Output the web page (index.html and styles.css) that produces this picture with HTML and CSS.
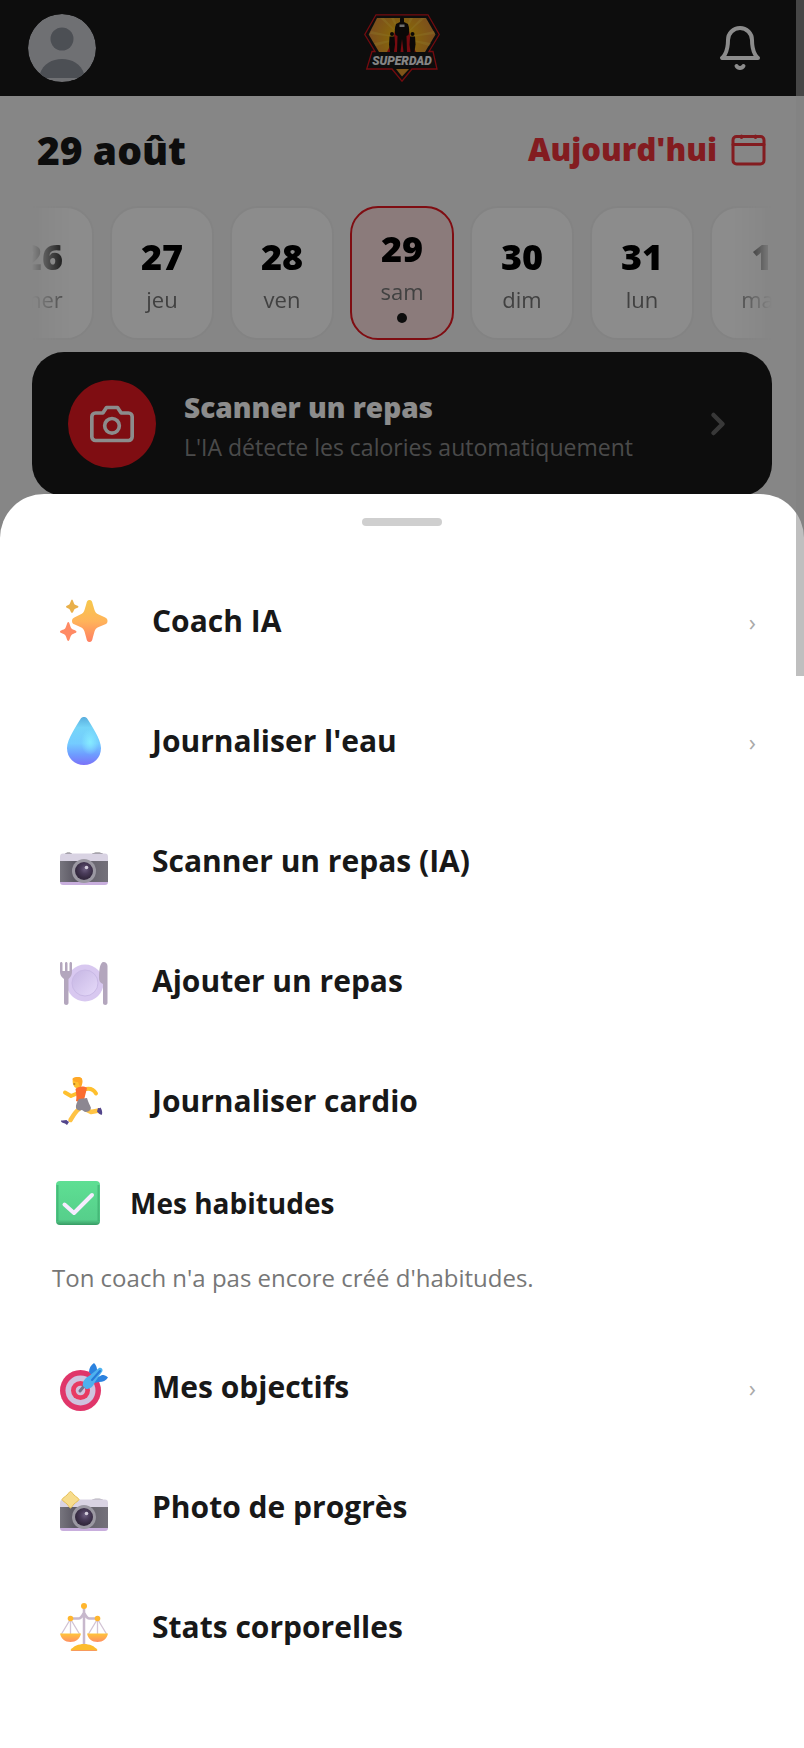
FILE: index.html
```html
<!DOCTYPE html>
<html lang="fr">
<head>
    <meta charset="UTF-8">
    <meta name="viewport" content="width=device-width, initial-scale=1.0">
    <title>Superdad</title>
    <link rel="stylesheet" href="styles.css">
</head>
<body>
    <header class="topbar">
        <button class="avatar" aria-label="Profil">
            <svg viewBox="0 0 68 68" width="68" height="68">
                <circle cx="34" cy="34" r="34" fill="#cbccd2"/>
                <circle cx="34" cy="25" r="11.500" fill="#8b9099"/>
                <path d="M12 59.500C15 50 24 45 34 45s19 5 22 14.500l-3.500 5.500h-37z" fill="#8b9099"/>
                <path d="M11 65h46" stroke="#cbccd2" stroke-width="2"/>
            </svg>
        </button>
        <svg class="logo" viewBox="0 0 76 68" width="76" height="68" role="img" aria-label="Superdad">
            <defs>
                <radialGradient id="sun" gradientUnits="userSpaceOnUse" cx="38" cy="24" r="34">
                    <stop offset="0" stop-color="#ffd400"/>
                    <stop offset=".45" stop-color="#f0b01c"/>
                    <stop offset="1" stop-color="#e08c38"/>
                </radialGradient>
            </defs>
            <path d="M12 .8h52l11.300 19.700L65 37.500h4L73 55H48L38 67.200 28 55H2.700L8 37.500h3L.8 20.500z" fill="#181818" stroke="#d3141c" stroke-width="1.300"/>
            <path d="M13 4h49l9.500 16.500L61 38H15L4.700 20.500z" fill="url(#sun)"/>
            <path d="M38 24 16 4h4zM38 24 27 4h3zM38 24 46 4h3zM38 24 57 4h4zM38 24 7 17l-1 3zM38 24 10 29l2 3zM38 24l32-7 1 3zM38 24l29 5-2 3z" fill="#ffd84a" opacity=".4"/>
            <path d="M33 11c-2 5-3 9-4 14-2 5-4 9-6 13h29c-3-5-4-9-5-13-1-5-2-9-4-14z" fill="#d9141e"/>
            <path d="M36 5c0-3.500 4-3.500 4 0v3l4 2c1.500 4 1.500 8 .5 11l-2 1 .5 16h-3.500L38 25l-1.500 13H33l.5-16-2-1c-1-3-1-7 .5-11l4-2z" fill="#15100e"/>
            <path d="M35.500 10.500h5v2.500h-5z" fill="#c9c9c9"/>
            <circle cx="28" cy="20" r="2" fill="#15100e"/>
            <path d="M25.500 22.500h5l.5 8-1 7.500h-4l-1-7.500z" fill="#15100e"/>
            <circle cx="48.500" cy="20" r="2" fill="#15100e"/>
            <path d="M46 22.500h5l.5 8-1 7.500h-4l-1-7.500z" fill="#15100e"/>
            <path d="M32 55h13l-7 7.500z" fill="#e69a2c"/>
            <text class="logo-text" x="38" y="51" text-anchor="middle">SUPERDAD</text>
        </svg>
        <button class="bell" aria-label="Notifications">
            <svg viewBox="0 0 24 24" width="48" height="48" class="line-icon">
                <path d="M18 8A6 6 0 0 0 6 8c0 7-3 9-3 9h18s-3-2-3-9"/>
                <path d="M13.730 21a2 2 0 0 1-3.460 0"/>
            </svg>
        </button>
    </header>

    <main class="page">
        <div class="date-row">
            <h1 class="date-title">29 août</h1>
            <button class="today">
                Aujourd'hui
                <svg viewBox="0 0 36 36" width="36" height="36" fill="none" stroke="currentColor" stroke-width="3" stroke-linecap="round">
                    <rect x="2" y="5.500" width="31" height="27.500" rx="3.500"/>
                    <path d="M2 13.500h31M10.500 5v1.500M24.500 5v1.500"/>
                </svg>
            </button>
        </div>

        <div class="days">
            <button class="day"><strong>26</strong><span>mer</span></button>
            <button class="day"><strong>27</strong><span>jeu</span></button>
            <button class="day"><strong>28</strong><span>ven</span></button>
            <button class="day day-active"><strong>29</strong><span>sam</span><i class="dot"></i></button>
            <button class="day"><strong>30</strong><span>dim</span></button>
            <button class="day"><strong>31</strong><span>lun</span></button>
            <button class="day"><strong>1</strong><span>mar</span></button>
        </div>

        <button class="scan">
            <span class="scan-icon">
                <svg viewBox="0 0 24 24" width="44" height="44" class="line-icon">
                    <path d="M23 19a2 2 0 0 1-2 2H3a2 2 0 0 1-2-2V8a2 2 0 0 1 2-2h4l2-3h6l2 3h4a2 2 0 0 1 2 2z"/>
                    <circle cx="12" cy="13" r="4"/>
                </svg>
            </span>
            <span class="scan-text">
                <span class="scan-title">Scanner un repas</span>
                <span class="scan-sub">L'IA détecte les calories automatiquement</span>
            </span>
            <svg viewBox="0 0 24 24" width="36" height="36" class="line-icon scan-arrow">
                <path d="M9 18l6-6-6-6"/>
            </svg>
        </button>
    </main>

    <div class="scrim"></div>

    <section class="sheet" aria-label="Actions rapides">
        <div class="handle"></div>

        <button class="action">
            <svg class="action-icon" viewBox="0 0 48 48">
                <defs>
                    <linearGradient id="spark" x1="0" y1="0" x2="0" y2="1">
                        <stop offset="0" stop-color="#f6c84c"/>
                        <stop offset=".5" stop-color="#ffb45a"/>
                        <stop offset="1" stop-color="#ff7f62"/>
                    </linearGradient>
                </defs>
                <path fill="url(#spark)" d="M29.500 3c2 0 2.700 1.500 3.200 4l1.800 6c.8 2.400 1.800 3.600 4.200 4.500l6 2.700c2 .9 2.800 1.900 2.800 3.700s-.8 2.700-2.800 3.600l-6 2.500c-2.400.9-3.500 2.100-4.200 4.500l-1.800 6.500c-.5 2.500-1.200 4-3.200 4s-2.700-1.500-3.200-4l-1.800-6.500c-.8-2.400-1.800-3.600-4.200-4.500l-5.500-2.500c-2-.9-2.800-1.800-2.800-3.600s.8-2.800 2.800-3.700l5.500-2.700c2.400-.9 3.500-2.100 4.200-4.500l1.800-6c.5-2.500 1.200-4 3.200-4z"/>
                <path fill="#e9b04a" d="M12 2.500c1 0 1.700 4 2.700 5s3.800 1.200 3.800 2.200-2.800 1.300-3.800 2.300-1.700 4-2.700 4-1.700-3-2.700-4-3.300-1.300-3.300-2.300 2.300-1.200 3.300-2.200S11 2.500 12 2.500z"/>
                <path fill="#ff8a64" d="M8.300 25c1.400 0 1.800 5 3.200 6.500s5 1.700 5 3.200-3.600 1.700-5 3.200-1.800 6-3.200 6-1.800-4.500-3.200-6-5.100-1.700-5.100-3.200 3.700-1.700 5.100-3.200S6.900 25 8.300 25z"/>
            </svg>
            <span class="action-label">Coach IA</span>
            <span class="action-arrow">›</span>
        </button>

        <button class="action">
            <svg class="action-icon" viewBox="0 0 48 48">
                <defs>
                    <linearGradient id="water" x1="0" y1="0" x2="0" y2="1">
                        <stop offset="0" stop-color="#5aaede"/>
                        <stop offset=".22" stop-color="#75d5f8"/>
                        <stop offset=".55" stop-color="#74ccff"/>
                        <stop offset=".78" stop-color="#6e9dff"/>
                        <stop offset="1" stop-color="#7b72f8"/>
                    </linearGradient>
                    <radialGradient id="shine">
                        <stop offset="0" stop-color="#86ebff"/>
                        <stop offset="1" stop-color="#86ebff" stop-opacity="0"/>
                    </radialGradient>
                </defs>
                <path fill="url(#water)" d="M20.500 2c1.600-2.600 5.400-2.600 7 0C31 8 41 22 41 31c0 10-7.500 17-17 17S7 41 7 31C7 22 17 8 20.500 2z"/>
                <ellipse cx="30" cy="25" rx="9" ry="13" fill="url(#shine)"/>
            </svg>
            <span class="action-label">Journaliser l'eau</span>
            <span class="action-arrow">›</span>
        </button>

        <button class="action">
            <svg class="action-icon" viewBox="0 0 48 48">
                <defs>
                    <radialGradient id="lens" cx=".55" cy=".4">
                        <stop offset="0" stop-color="#6d5f80"/>
                        <stop offset=".5" stop-color="#4a3c5a"/>
                        <stop offset="1" stop-color="#352a40"/>
                    </radialGradient>
                    <linearGradient id="shell" x1="0" x2="1">
                        <stop offset="0" stop-color="#77757e"/>
                        <stop offset=".3" stop-color="#5c5964"/>
                        <stop offset="1" stop-color="#74717a"/>
                    </linearGradient>
                </defs>
                <path d="M5 17c0-2 7-2 7 0zM32 17c0-2 11-2 11 0z" fill="#77747a"/>
                <path d="M0 20c0-2.500 1-3.500 3-3.500h42c2 0 3 1 3 3.500v5H0z" fill="#d9d3e3"/>
                <path d="M0 24h48v21H0z" fill="url(#shell)"/>
                <path d="M0 45h48c0 2-1 3-3 3H3c-2 0-3-1-3-3z" fill="#c8aedd"/>
                <circle cx="24" cy="34" r="12" fill="#9b98a2"/>
                <circle cx="24" cy="34" r="9" fill="url(#lens)"/>
                <circle cx="26.500" cy="30.500" r="1.800" fill="#d2ccda"/>
            </svg>
            <span class="action-label">Scanner un repas (IA)</span>
        </button>

        <button class="action">
            <svg class="action-icon" viewBox="0 0 48 48">
                <defs>
                    <linearGradient id="plate" x1="0" y1="0" x2="1" y2="1">
                        <stop offset="0" stop-color="#c5b5e3"/>
                        <stop offset="1" stop-color="#e7dbfa"/>
                    </linearGradient>
                </defs>
                <circle cx="25" cy="26" r="18.500" fill="#d8c8f0"/>
                <circle cx="25" cy="26" r="13" fill="url(#plate)" stroke="#c9b9e5"/>
                <path fill="#b3a6bd" d="M0 6.500c0-2 2.500-2 2.500 0V14H5V6.500c0-2 2.500-2 2.500 0V14h2V6.500c0-2 2.500-2 2.500 0V15c0 3-1.500 5-3.500 7v24c0 2.500-4.500 2.500-4.500 0V22C1.500 20 0 18 0 15z"/>
                <path fill="#b3a6bd" d="M43.500 5C46 5 47.500 7 47.500 9v37c0 2.500-4.500 2.500-4.500 0V27c-3-1-4-3-4-6 0-8 1-16 4.500-16z"/>
            </svg>
            <span class="action-label">Ajouter un repas</span>
        </button>

        <button class="action">
            <svg class="action-icon" viewBox="0 0 48 48" fill="none" stroke-linecap="round" stroke-linejoin="round">
                <path d="M17 16.500l-6 2.500-6-3.500M26 12c5-1 8 1 10 4.500" stroke="#ffc02e" stroke-width="4"/>
                <path d="M19 32c-4 3-6 7-8.500 11M27 33l4 2 8-1.500" stroke="#ffc344" stroke-width="4.500"/>
                <path d="M13 1c3-1 8-1.500 9 1 .5 3 0 7-2 10l-4-1c-3-1-4-6-3-10z" fill="#ffc02e"/>
                <path d="M12.500 2c1-2.500 9-3 9.500 0 .8 2.500.5 6-1.500 7.500-2-1-1.500-3-2.500-4.500-1.500 0-5-.5-5.500-3z" fill="#ffa726"/>
                <path d="M15.500 12c2-2.500 8-3.500 11.500-1l-3 12c-3 2-6 2-8 1 1-4 0-8-.5-12z" fill="#fb6d30"/>
                <path d="M19 22l8-1c1 4 3 7 4 10-1 3-3 4-6 4l-3-2c-3 1-5 0-6-2-.5-3 1-6 3-9z" fill="#8c8791"/>
                <path d="M38 31c1 .3 2 .2 2.500-.5 1.500 2 2 5 1.500 7-2 1-4-2-5-3z" fill="#53458b"/>
                <path d="M1 43.500c2 .3 4-.3 5.500-.5 1 1 2 1.500 2.500 2l-2 3-2-1.500C3 46 .5 45 1 43.500z" fill="#53458b"/>
                <path d="M13.800 7h1" stroke="#7b4a22" stroke-width="1"/>
            </svg>
            <span class="action-label">Journaliser cardio</span>
        </button>

        <div class="habits">
            <h2 class="habits-title">
                <svg viewBox="0 0 44 44" width="44" height="44">
                    <defs>
                        <linearGradient id="tick" x1="0" y1="0" x2="0" y2="1">
                            <stop offset="0" stop-color="#5edf93"/>
                            <stop offset=".88" stop-color="#56cf8b"/>
                            <stop offset="1" stop-color="#379a64"/>
                        </linearGradient>
                    </defs>
                    <rect width="44" height="44" rx="4" fill="url(#tick)"/>
                    <path d="M1.500 4v36M42.500 4v36" stroke="#3fae70" stroke-width="2" opacity=".7"/>
                    <path d="M8.500 23.500l9.500 8.500L36 14" fill="none" stroke="#f6ecff" stroke-width="4" stroke-linecap="round" stroke-linejoin="round"/>
                </svg>
                Mes habitudes
            </h2>
            <p class="habits-empty">Ton coach n'a pas encore créé d'habitudes.</p>
        </div>

        <button class="action">
            <svg class="action-icon" viewBox="0 0 48 48">
                <circle cx="20.500" cy="27.500" r="20.500" fill="#e0366a"/>
                <circle cx="20.500" cy="27.500" r="15" fill="#cfc3df"/>
                <circle cx="20.500" cy="27.500" r="9.500" fill="#e83a62"/>
                <circle cx="20.500" cy="27.500" r="4.800" fill="#cfc3df"/>
                <path d="M20 28l4-5" stroke="#76708a" stroke-width="3" stroke-linecap="round"/>
                <path d="M29 9c0-4 2-7 5-9 2 2 3 4 3 7l-3 8zM36 15l6-3c2 0 4 .5 6 2.500-2 3-5 4.500-9 4.500l-5 1z" fill="#2b82df"/>
                <path d="M23 23c-1-4 2-8 6-10l10-8c2-1 4 1 3.500 3L35 19c-2 5-5 7-9 7z" fill="#4db1ee"/>
                <path d="M32 17l8-9" stroke="#2678d8" stroke-width="2" stroke-linecap="round"/>
            </svg>
            <span class="action-label">Mes objectifs</span>
            <span class="action-arrow">›</span>
        </button>

        <button class="action">
            <svg class="action-icon" viewBox="0 0 48 48">
                <path d="M32 17c0-2 11-2 11 0z" fill="#b3afb8"/>
                <path d="M0 20c0-2.500 1-3.500 3-3.500h42c2 0 3 1 3 3.500v5H0z" fill="#d9d3e3"/>
                <path d="M0 24h48v21H0z" fill="url(#shell)"/>
                <path d="M0 45h48c0 2-1 3-3 3H3c-2 0-3-1-3-3z" fill="#c8aedd"/>
                <circle cx="24" cy="34" r="12" fill="#9b98a2"/>
                <circle cx="24" cy="34" r="9" fill="url(#lens)"/>
                <circle cx="26.500" cy="30.500" r="1.800" fill="#d2ccda"/>
                <path d="M10.500 8.500c1 0 2 2 3.500 3.500s5 3.500 5 4.500-3.500 3-5 4.500-2.500 4-3.500 4-2-2.500-3.500-4-5-3.500-5-4.500 3.500-3 5-4.500 2.500-3.500 3.500-3.500z" fill="#f7dc8c" stroke="#e6bf55"/>
            </svg>
            <span class="action-label">Photo de progrès</span>
        </button>

        <button class="action">
            <svg class="action-icon" viewBox="0 0 48 48">
                <defs>
                    <linearGradient id="pan" x1="0" y1="0" x2="0" y2="1">
                        <stop offset="0" stop-color="#ffc53a"/>
                        <stop offset="1" stop-color="#ff8f62"/>
                    </linearGradient>
                </defs>
                <path d="M24 5v36M10.500 15.500h8c3 0 4-3 5.500-6 1.500 3 2.500 6 5.500 6h8" fill="none" stroke="#c7b8cc" stroke-width="2.500"/>
                <path d="M10.500 16L1.500 31M10.500 16v15M10.500 16l9 15M37.500 16l-9 15M37.500 16v15M37.500 16l9 15" fill="none" stroke="#d2c3d4" stroke-width="1.300"/>
                <path d="M0 30.500h21c-1 5-5 8.500-10.500 8.500S1 35.500 0 30.500zM27 30.500h21c-1 5-5 8.500-10.500 8.500S28 35.500 27 30.500z" fill="url(#pan)"/>
                <path d="M10.500 47c3-4 8-6 13.500-6s10.500 2 13.500 6c-.3.700-.8 1-1.500 1H12c-.7 0-1.200-.3-1.500-1z" fill="#fcbc2c"/>
                <path d="M11.500 47.500h25" stroke="#f79a5c"/>
                <g fill="#ffb62e">
                    <circle cx="24" cy="3" r="3"/>
                    <circle cx="10.500" cy="15.500" r="2.800"/>
                    <circle cx="37.500" cy="15.500" r="2.800"/>
                </g>
            </svg>
            <span class="action-label">Stats corporelles</span>
        </button>
    </section>

    <div class="scroll-thumb"></div>
</body>
</html>
```

FILE: styles.css
```css
* {
    box-sizing: border-box;
}
body {
    margin: 0;
    min-height: 100vh;
    background-color: #f4f4f4;
    color: #181818;
    font-family: "Segoe UI", "Open Sans", "Noto Sans", sans-serif;
    overflow: hidden;
}
button {
    border: 0;
    padding: 0;
    background: none;
    color: inherit;
    font-family: inherit;
    cursor: pointer;
}
svg {
    display: block;
    flex-shrink: 0;
}
.line-icon {
    fill: none;
    stroke: currentColor;
    stroke-width: 2;
    stroke-linecap: round;
    stroke-linejoin: round;
}

/* Header */
.topbar {
    display: grid;
    grid-template-columns: 1fr auto 1fr;
    align-items: center;
    height: 96px;
    padding: 0 28px;
    background-color: #181818;
    color: #fff;
}
.avatar {
    justify-self: start;
    border-radius: 50%;
    overflow: hidden;
}
.bell {
    justify-self: end;
    padding-right: 12px;
}
.logo-text {
    font-family: "Liberation Sans Narrow", "Roboto", sans-serif;
    font-size: 12px;
    font-weight: 900;
    font-style: italic;
    fill: #f2f2f2;
}

/* Date and day picker */
.page {
    padding: 0 32px;
}
.date-row {
    display: flex;
    align-items: center;
    justify-content: space-between;
    height: 110px;
    padding: 0 5px 4px;
}
.date-title {
    margin: 0;
    font-size: 39px;
    font-weight: 800;
}
.today {
    display: flex;
    align-items: center;
    gap: 14px;
    color: #ee333b;
    font-size: 31px;
    font-weight: 800;
}
.days {
    display: flex;
    justify-content: center;
    gap: 16px;
    overflow: hidden;
    -webkit-mask-image: linear-gradient(to right, transparent, #000 40px, #000 calc(100% - 40px), transparent);
    mask-image: linear-gradient(to right, transparent, #000 40px, #000 calc(100% - 40px), transparent);
}
.day {
    display: flex;
    flex-direction: column;
    align-items: center;
    justify-content: center;
    flex: 0 0 104px;
    height: 134px;
    padding-top: 8px;
    border: 2px solid #efefef;
    border-radius: 28px;
    background-color: #fff;
}
.day strong {
    color: #000;
    font-size: 36px;
    font-weight: 800;
    line-height: 44px;
}
.day span {
    color: #777;
    font-size: 22px;
    line-height: 40px;
}
.day-active {
    padding-top: 4px;
    border-color: #e71821;
    background-color: #fde0e0;
}
.dot {
    width: 10px;
    height: 10px;
    margin-top: 2px;
    border-radius: 50%;
    background-color: #181818;
}

/* Scan banner */
.scan {
    display: flex;
    align-items: center;
    gap: 28px;
    width: 100%;
    margin-top: 12px;
    padding: 28px 36px;
    border-radius: 32px;
    background-color: #181818;
    color: #fff;
    text-align: left;
}
.scan-icon {
    display: grid;
    place-items: center;
    flex: 0 0 88px;
    height: 88px;
    border-radius: 50%;
    background-color: #e71821;
}
.scan-text {
    display: flex;
    flex-direction: column;
    flex: 1;
    padding-top: 6px;
}
.scan-title {
    font-size: 28px;
    font-weight: 800;
    line-height: 40px;
}
.scan-sub {
    color: #888;
    font-size: 23px;
    line-height: 40px;
}
.scan-arrow {
    color: #666;
    stroke-width: 3;
}

/* Bottom sheet */
.scrim {
    position: fixed;
    inset: 0;
    background-color: rgba(0, 0, 0, .45);
}
.sheet {
    position: fixed;
    right: 0;
    bottom: 0;
    left: 0;
    padding: 24px 32px 61px;
    border-radius: 44px 44px 0 0;
    background-color: #fff;
}
.handle {
    width: 80px;
    height: 8px;
    margin: 0 auto 35px;
    border-radius: 4px;
    background-color: #cfcfcf;
}
.action {
    display: flex;
    align-items: center;
    gap: 44px;
    width: 100%;
    height: 120px;
    padding: 0 16px 0 28px;
    text-align: left;
}
.action-icon {
    width: 48px;
    height: 48px;
}
.action-label {
    flex: 1;
    padding-bottom: 2px;
    font-size: 30px;
    font-weight: 700;
}
.action-arrow {
    color: #aaa;
    font-size: 24px;
}
.habits {
    padding: 20px 20px 28px;
}
.habits-title {
    display: flex;
    align-items: center;
    gap: 30px;
    height: 44px;
    margin: 0 0 32px;
    padding-left: 4px;
    font-size: 28px;
    font-weight: 700;
    line-height: 40px;
}
.habits-empty {
    margin: 0;
    color: #777;
    font-size: 24px;
    line-height: 42px;
}

/* Overlay scrollbar */
.scroll-thumb {
    position: fixed;
    top: 0;
    right: 0;
    width: 8px;
    height: 676px;
    background-color: rgba(128, 128, 128, .5);
}
```
